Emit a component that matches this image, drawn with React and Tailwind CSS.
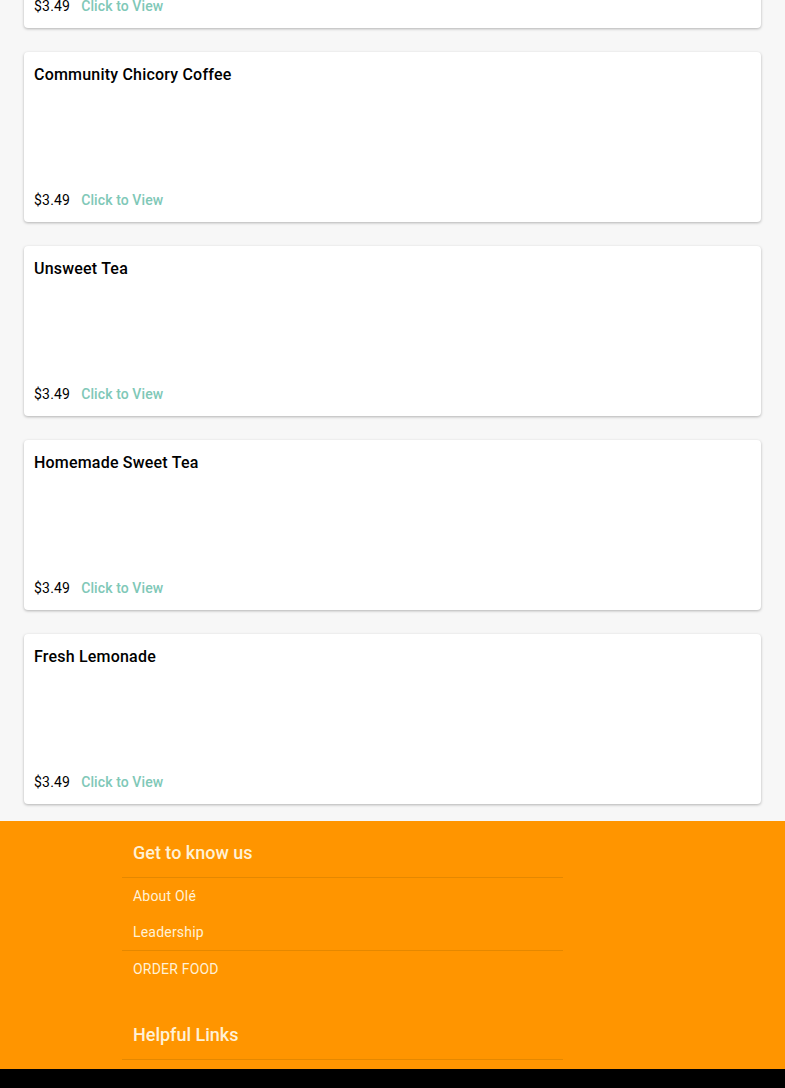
import React from "react";

const drinks = [
  "Sweet Tea Lemonade",
  "Community Chicory Coffee",
  "Unsweet Tea",
  "Homemade Sweet Tea",
  "Fresh Lemonade",
];

const MenuCard = ({ name }) => (
  <div className="h-[170px] bg-white rounded-[4px] shadow-[0_1px_3px_rgba(0,0,0,0.28)] flex flex-col justify-between px-[10px] pt-[11px] pb-[12px]">
    <h4 className="text-[16px] leading-[24px] font-medium text-black tracking-[0.2px]">{name}</h4>
    <div className="flex items-center gap-[11px] text-[14px] leading-[20px]">
      <span className="text-black tracking-[0.2px]">$3.49</span>
      <span className="text-[#80c8b7] font-medium tracking-[0.1px]">Click to View</span>
    </div>
  </div>
);

const FooterLink = ({ children }) => (
  <a className="block h-[36px] leading-[36px] pl-[11px] text-[14px] text-[#fff1d6] tracking-[0.2px]">{children}</a>
);

export default function App() {
  return (
    <div className="min-h-screen bg-[#f7f7f7] font-['Roboto',sans-serif]">
      <div className="-mt-[142px] px-[24px] pb-[17px] flex flex-col gap-[24px]">
        {drinks.map((d) => (
          <MenuCard key={d} name={d} />
        ))}
      </div>
      <footer className="bg-[#ff9500] pt-[17px] pb-[9px]">
        <div className="w-[441px] ml-[122px]">
          <h3 className="text-[18px] leading-[30px] font-medium text-[#fff1d6] pl-[11px] pb-[9px] border-b border-[#e58800]">
            Get to know us
          </h3>
          <FooterLink>About Olé</FooterLink>
          <div className="border-b border-[#e58800]">
            <FooterLink>Leadership</FooterLink>
          </div>
          <FooterLink>ORDER FOOD</FooterLink>
          <h3 className="mt-[33px] text-[18px] leading-[30px] font-medium text-[#fff1d6] pl-[11px] pb-[9px] border-b border-[#e58800]">
            Helpful Links
          </h3>
        </div>
      </footer>
      <div className="bg-black h-[60px]" />
    </div>
  );
}
